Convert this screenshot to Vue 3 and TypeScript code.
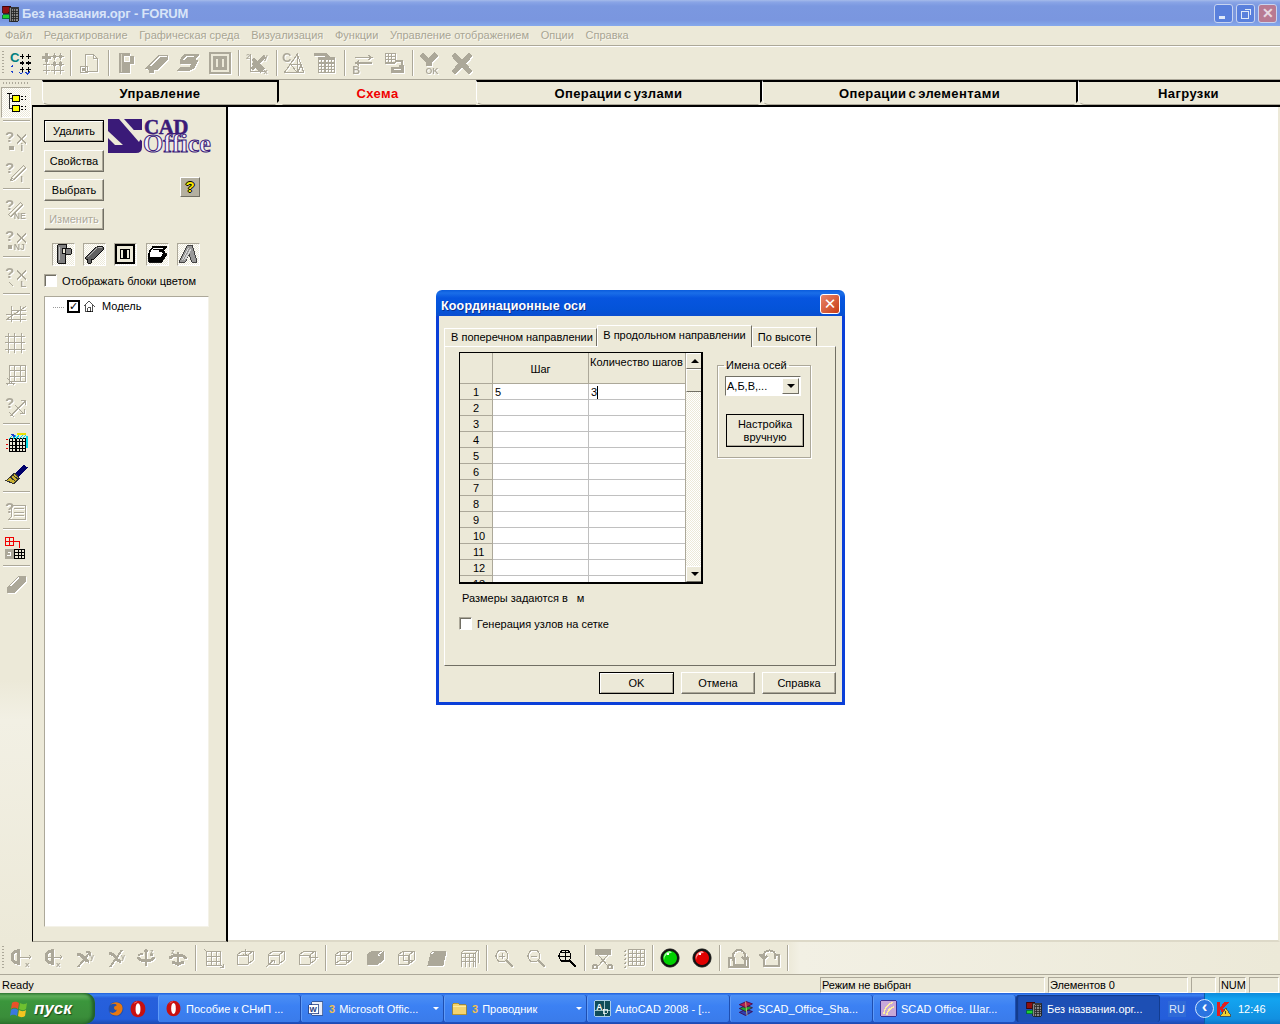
<script setup lang="ts">
import { h } from 'vue';

type Part = { d?: string; c?: string; f?: string; w?: number; t?: string; x?: number; y?: number; s?: number };
const G = '#aca899';
const p = (d: string, c: string = G, f: string = 'none', w = 1): Part => ({ d, c, f, w });
const tx = (t: string, x: number, y: number, s = 8, c: string = G): Part => ({ t, x, y, s, c });

const crosses = (xs: number[], ys: number[], s = 2) =>
  ys.map(y => xs.map(x => `M${x - s} ${y}h${2 * s}M${x} ${y - s}v${2 * s}`).join('')).join('');
const grid = (x: number, y: number, n: number, m: number, st: number) => {
  let d = '';
  for (let i = 0; i <= n; i++) d += `M${x + i * st} ${y}v${m * st}`;
  for (let j = 0; j <= m; j++) d += `M${x} ${y + j * st}h${n * st}`;
  return d;
};
const cube = 'M3 8l5-4h11v9l-5 4H3zM3 8h11v9M14 8l5-4';
const ask = (c: string = G): Part => ({ t: '?', x: 1, y: 13, s: 14, c });
const node = 'M12 6l8 8M20 6l-8 8';
const ball = (a: string, b: string): Part[] => [
  p('M11 2a9 9 0 1 0 .01 0z', '#111', '#111'),
  p('M11 4a7 7 0 1 0 .01 0z', 'none', b),
  p('M11 4a7 7 0 0 0-6 9a7 7 0 0 1 8-7z', 'none', a),
  p('M8 6h2v2H8z', 'none', '#fff')
];

const icons: Record<string, Part[]> = {
  nodes: [tx('C', 1, 10, 12, '#008080'), p(crosses([12, 18], [5, 11, 17]), '#000'), p(crosses([3], [14, 19], 1), '#1a3fd0'), p('M9 19l2 2 2-2M15 19l2 2 2-2', '#1a3fd0')],
  nodesOff: [p('M2 6h8M6 2v8', G, 'none', 3), p(crosses([6, 13, 19], [12, 18], 3) + crosses([13, 19], [5], 3)), p('M12 4h2v2h-2zM18 4h2v2h-2zM12 11h2v2h-2zM18 11h2v2h-2z', G, G)],
  doc: [p('M8 3h7l4 4v12H8zM15 3v4h4'), p('M3 14h7v6H3z', G), p('M5 16h3v2H5z', G, G)],
  column: [p('M5 2h9v3h4v6h-4v9H5z', G, G), p('M10 5h4v5h-4z', '#fff', '#ece9d8'), p('M7 3v16', '#d8d4c4')],
  beam: [p('M1 16L13 4h8v3L11 17H8v3H4v-3z', G, G), p('M5 14L14 5h6', '#fff')],
  slab: [p('M3 8l4-5h13l-3 4h-5l5 1 2 1-4 7-4 2H1l3-3h8l2-4H3z', G, G), p('M6 8l3-3h7', '#fff')],
  frame: [p('M2 2h18v18H2z', G, '#ece9d8', 2), p('M6 6h4v10H6zM12 6h4v10h-4z', G, '#ece9d8', 2)],
  scatter: [p('M5 3v16h14', G), p('M6 17L18 5M7 11l8 8M7 7l10 10', G, 'none', 3), tx('2', 1, 7, 7), tx('y', 17, 7, 7), tx('x', 17, 21, 7)],
  mesh: [tx('C', 0, 10, 12), p('M2 20L14 3l6 17zM8 12h10M14 3v17M8 12l6 8M18 12l-4 8')],
  gridRoof: [p('M1 3h10l4 4M5 7h15', G, 'none', 3), p(grid(5, 8, 5, 4, 3))],
  swap: [p('M5 6h14M17 4l3 2-3 2M20 11H6M8 9l-3 2 3 2'), tx('В', 2, 21, 10)],
  gridSwap: [p(grid(3, 2, 3, 3, 3)), p('M13 9h5v5M16 13l2 2 2-2', G, 'none', 2), p('M9 15h11v5H9z', G, G), p('M11 17h6', '#fff')],
  yMark: [p('M2 3l7 7 7-7M9 10v4', G, 'none', 5), tx('OK', 6, 21, 8)],
  bigX: [p('M3 3l16 17M19 3L3 20', G, 'none', 5)],

  tree: [p('M5 3v13M5 7h3M5 16h3', '#333'), p('M8 4h6v6H8zM8 13h6v6H8z', '#000', '#ffff00'), p('M3 2h4M16 5h1M19 5h1M16 8h1M19 8h1M16 14h1M19 14h1M16 17h1M19 17h1', '#000')],
  qNodeI: [ask(), p(node), tx('i', 15, 21, 10), p('M5 17h4v3H5z', G, G)],
  qPenI: [ask(), p('M6 20l3-1 11-11-2-2L7 17zM9 19l-2-2'), tx('I', 15, 21, 9)],
  qPenNe: [ask(), p('M4 17L15 6l2 2L6 19z'), tx('NE', 9, 21, 8)],
  qNodeNj: [ask(), p(node), tx('NJ', 9, 21, 8), p('M4 17h3v3H4z', G, G)],
  qNodeL: [ask(), p(node), tx('L', 15, 21, 9), p('M5 17l3 3')],
  rails: [p('M2 17L20 5M2 12h18M2 17h18M6 9h14M7 5v14M15 5v14')],
  gridDots: [p(crosses([4, 10, 16], [4, 10, 16], 3))],
  gridLarge: [p(grid(5, 2, 3, 3, 5)), p('M2 19h8M3 14l6 6M6 17l-3 3')],
  qArrows: [ask(), p('M6 20L20 6M16 6h4v4M10 10l8 8M15 18h4v-4M5 17l4 4')],
  mesh3d: [p(grid(5, 7, 5, 4, 3), '#000'), p('M5 7l3-3M8 7l3-3M11 7l3-3M14 7l3-3M17 7l3-3', '#00d8e8'), p('M7 3l3 2', '#1a3fd0', 'none', 2), p('M12 3h8', '#e8e000', 'none', 2), p('M21 5v11', '#00d8e8', 'none', 2), p('M2 8h2M2 12h2M2 16h2', '#e00000', 'none', 1)],
  brush: [p('M10 11l8-8 3 2-8 8z', '#00006a', '#00006a'), p('M10 10l4 5-5 5-7-3z', '#333', '#c8b030'), p('M6 14l5 4M8 12l5 4', '#333')],
  qSheet: [ask(), p('M7 6h13v13H4l3-3zM9 9h9M9 12h9M9 15h9')],
  redBlack: [p(grid(1, 1, 2, 2, 4), '#f00000'), p('M9 5h5v6', '#f00000'), p('M1 12h8v9H1z', G, G), p('M4 15h2v3H3', '#fff'), p(grid(10, 12, 3, 3, 3), '#000')],
  bar3d: [p('M3 14L14 3h6v4L9 18H3zM3 14h6v4M9 14L20 3', G, G), p('M6 12l8-8', '#fff')],

  axisX1: [p('M7 4a4 4 0 0 0 0 12M7 2v16', G, 'none', 3), p('M9 10h11M18 8l2 2-2 2'), tx('x', 14, 20, 8)],
  axisX2: [p('M10 4a4 4 0 0 0 0 12M10 2v16', G, 'none', 3), p('M4 10h16M18 8l2 2-2 2'), tx('x', 14, 20, 8)],
  axisY1: [p('M5 20L17 5M17 5h-4M17 5v4', G, 'none', 2), p('M4 8c6-3 8 8 12 6', G, 'none', 3), tx('y', 17, 12, 7)],
  axisY2: [p('M6 20L18 3', G, 'none', 2), p('M5 7c6-3 7 9 12 7', G, 'none', 3), tx('y', 17, 12, 7)],
  rotZ1: [p('M11 3v16M9 5l2-2 2 2', G, 'none', 2), p('M3 10a8 4 0 0 0 16 0', G, 'none', 3), p('M4 9a3 2 0 0 1 4-2M15 8h3', G, 'none', 2), tx('z', 15, 7, 7)],
  rotZ2: [p('M11 5v14', G, 'none', 2), p('M3 12a8 4 0 0 1 16 0M5 15a8 4 0 0 0 12 0', G, 'none', 3), tx('z', 4, 7, 7)],
  cubeGrid: [p('M3 4h14v14H3zM8 4v14M13 4v14M3 9h14M3 14h14'), p('M1 2l3 3M17 17l3 3M17 20h3v-3')],
  cubeDown: [p(cube), p('M11 2v7M9 7l2 2 2-2')],
  cubeArrow: [p(cube), p('M1 20l8-7M6 13h3v3')],
  cubeRight: [p(cube), p('M22 10h-9M15 8l-2 2 2 2')],
  cubeWire: [p(cube), p('M3 17l5-4h11M8 4v9')],
  cubeSolid: [p('M3 8l5-4h11v9l-5 4H3z', G, G), p('M14 8l5-4', '#fff'), p('M14 8h2', '#fff')],
  cubeFace: [p(cube), p('M14 8v9', G, 'none', 2), p('M8 4v9h11')],
  plateSolid: [p('M5 6L8 4h12l-3 14H2z', G, G), p('M8 5l-3 2', '#fff')],
  frame3d: [p('M4 6h14v14M4 6v14M8 6v14M12 6v14M16 6v14M4 10h14M4 14h14M4 6l3-3h14l-3 3M21 3v13')],
  zoomIn: [p('M9 3a6 6 0 1 0 .01 0zM6 9h6M9 6v6'), p('M13 13l7 7', G, 'none', 2)],
  zoomOut: [p('M9 3a6 6 0 1 0 .01 0zM6 9h6'), p('M13 13l7 7', G, 'none', 2)],
  zoomAll: [p('M9 3a6 6 0 1 0 .01 0zM3 9h12M9 3v12M5 5h8M5 13h8', '#000'), p('M13 13l7 7', '#000', 'none', 2)],
  cut: [p('M3 2h15v5H3z', G, G), p('M5 20L16 8M17 20L6 8'), p('M3 18a2 2 0 1 0 .01 0zM18 18a2 2 0 1 0 .01 0z', G, 'none', 2)],
  gridFine: [p(grid(5, 2, 4, 4, 4)), p(crosses([2], [4, 8, 12, 16, 20], 1))],
  green: ball('#9cff9c', '#00d000'),
  red: ball('#ff9a9a', '#e00000'),
  undo: [p('M2 11h5v7h11v-7h3v9H2z', G, 'none', 2), p('M6 14V9a6 6 0 0 1 12 0v3M18 13l-3-3M18 13l3-3', G, 'none', 2)],
  redo: [p('M1 8h4M17 8h4v11H6v-7', G, 'none', 2), p('M17 12V7A6 6 0 0 0 6 7v3M6 12L3 9M6 12l3-3', G, 'none', 2)],

  p1: [p('M5 1h10v4h5v6h-6v10H5z', '#000', '#808080'), p('M10 5h4v5h-4z', '#000', '#ece9d8'), p('M7 3v15', '#c8c8c8')],
  p2: [p('M1 16L14 3h7v4L11 17H8v4H4v-4z', '#000', '#606060'), p('M4 15L15 4h5', '#bbb')],
  p3: [p('M1 1h20v20H1z', '#000', '#ece9d8', 3), p('M6 6h4v10H6zM12 6h4v10h-4z', '#000', '#ece9d8', 2)],
  p4: [p('M3 8l4-5h14l-4 4h-4l6 2-3 6H2z', '#000', '#fff', 2), p('M2 15h15l4-5v3l-5 7H2z', '#000', '#000'), p('M7 6h6', '#000', 'none', 2)],
  p5: [p('M1 20L10 2h6l5 18h-6l-3-9-4 9z', '#333', '#999'), p('M5 18l7-14M7 18l7-13M9 16l5-10', '#ddd')],
  house: [p('M1 9l8-7 8 7M4 8v9h10V8M7 11h4v6H7z', '#000', '#fff')],

  fox: [p('M11 2a9 9 0 1 0 .01 0z', 'none', '#2050b0'), p('M4 6c3-4 10-5 14 0 3 6-1 12-6 13-5 0-8-2-9-5 3 3 8 2 9-2-3 1-4-2-3-4 1-1 3-1 3-2-2-2-5-2-8 0z', 'none', '#e87810')],
  opera: [p('M11 1c5 0 9 4 9 10s-4 10-9 10-9-4-9-10S6 1 11 1z', 'none', '#c81010'), p('M11 4c-2 0-3 3-3 7s1 7 3 7 3-3 3-7-1-7-3-7z', 'none', '#fff'), p('M6 4l4-2', '#ff7070')],
  word: [p('M5 2h14v18H5z', '#33508a', '#e8edf8'), p('M1 6h13v12H1z', '#1e3a80', '#fff'), tx('W', 2, 16, 10, '#1e3a80')],
  folder: [p('M2 6l1-2h6l2 2h9v13H2z', '#a8881c', '#f4d470'), p('M2 9h18', '#fff2b0')],
  acad: [p('M1 1h20v20H1z', '#c8e4e4', '#104c58'), tx('A', 3, 13, 11, '#fff'), p('M14 1v20M1 14h20', '#c8e4e4'), p('M12 12h5v5h-5z', '#fff')],
  rar: [p('M3 16l9-4 8 3-9 5z', '#400040', '#3040b0'), p('M3 11l9-4 8 3-9 5z', '#400040', '#20a030'), p('M3 6l9-4 8 3-9 5z', '#400040', '#b02050'), p('M11 2l2 18', '#e0d080')],
  scad: [p('M1 1h20v20H1z', '#3a1a78', '#c8a8d8'), p('M5 18C6 10 10 5 17 3M9 19c1-6 5-9 9-10', '#fff0a0', 'none', 2)],
  forum: [p('M1 3h10l-3 8H1z', '#300', '#901010'), p('M9 4h11v17H9z', '#222', '#888'), p(grid(11, 6, 3, 5, 3), '#222'), p('M1 13h8v5H1z', '#063', '#20d030')],
  kav: [p('M2 2h4v8l7-8h6l-9 9 9 10h-6l-7-9v9H2z', 'none', '#e02020'), p('M14 10l7 11h-14z', '#444', '#f0d030'), p('M14 14v4', '#222')]
};

const smooth = new Set(['green', 'red', 'fox', 'opera', 'rar']);

const Ico = (props: { name: string; size?: number }) => {
  const parts = icons[props.name] || [];
  return h('svg', {
    viewBox: '0 0 22 22',
    width: props.size || 22,
    height: props.size || 22,
    'shape-rendering': smooth.has(props.name) ? 'auto' : 'crispEdges'
  }, parts.map(q => q.t
    ? h('text', { x: q.x, y: q.y, 'font-size': q.s, 'font-weight': 'bold', 'font-family': '"Liberation Sans", sans-serif', fill: q.c }, q.t)
    : h('path', { d: q.d, stroke: q.c, fill: q.f, 'stroke-width': q.w })));
};
Ico.props = ['name', 'size'];

const menu = ['Файл', 'Редактирование', 'Графическая среда', 'Визуализация', 'Функции', 'Управление отображением', 'Опции', 'Справка'];

const topBar = ['nodes', 'nodesOff', '|', 'doc', '|', 'column', 'beam', 'slab', 'frame', '|', 'scatter', '|', 'mesh', 'gridRoof', '|', 'swap', 'gridSwap', '|', 'yMark', 'bigX'];
const rail = ['tree', '|', 'qNodeI', 'qPenI', '|', 'qPenNe', 'qNodeNj', '|', 'qNodeL', '|', 'rails', 'gridDots', 'gridLarge', 'qArrows', '|', 'mesh3d', 'brush', '|', 'qSheet', '|', 'redBlack', '|', 'bar3d'];
const railOn = ['mesh3d', 'brush', 'redBlack', 'tree'];
const bottomBar = ['axisX1', 'axisX2', 'axisY1', 'axisY2', 'rotZ1', 'rotZ2', '|', 'cubeGrid', 'cubeDown', 'cubeArrow', 'cubeRight', '|', 'cubeWire', 'cubeSolid', 'cubeFace', 'plateSolid', 'frame3d', '|', 'zoomIn', 'zoomOut', 'zoomAll', '|', 'cut', 'gridFine', '|', 'green', 'red', '|', 'undo', 'redo', '|'];
const barOn = ['nodes', 'zoomAll', 'green', 'red'];

const tabs = [
  { label: 'Управление', w: 237 },
  { label: 'Схема', w: 197, active: true },
  { label: 'Операции с узлами', w: 286 },
  { label: 'Операции с элементами', w: 316 },
  { label: 'Нагрузки', w: 222 }
];

const tasks = [
  { icon: 'opera', label: 'Пособие к СНиП ...', w: 143 },
  { icon: 'word', count: '3', label: 'Microsoft Offic...', w: 143, arrow: true },
  { icon: 'folder', count: '3', label: 'Проводник', w: 143, arrow: true },
  { icon: 'acad', label: 'AutoCAD 2008 - [...', w: 143 },
  { icon: 'rar', label: 'SCAD_Office_Sha...', w: 143 },
  { icon: 'scad', label: 'SCAD Office. Шаг...', w: 143 },
  { icon: 'forum', label: 'Без названия.орг...', w: 144, active: true }
];

const rowsNo = Array.from({ length: 13 }, (_, i) => i + 1);
</script>

<template>
  <div class="desk">
    <div class="titlebar">
      <Ico name="forum" :size="18" />
      <span class="title">Без названия.орг - FORUM</span>
      <span class="caps">
        <span class="cap"><i class="mini"></i></span>
        <span class="cap"><i class="restore"></i></span>
        <span class="cap close">✕</span>
      </span>
    </div>

    <div class="menubar">
      <span v-for="m in menu" :key="m">{{ m }}</span>
    </div>

    <div class="toolbar top">
      <i class="grip-v"></i>
      <template v-for="(b, i) in topBar" :key="i">
        <i v-if="b === '|'" class="sep"></i>
        <span v-else class="tool" :class="{ off: !barOn.includes(b) }"><Ico :name="b" :size="24" /></span>
      </template>
    </div>

    <div class="work">
      <div class="rail">
        <i class="grip-h"></i>
        <template v-for="(b, i) in rail" :key="i">
          <i v-if="b === '|'" class="sep-h"></i>
          <span v-else class="rail-tool" :class="{ off: !railOn.includes(b), pressed: b === 'tree' }"><Ico :name="b" :size="24" /></span>
        </template>
      </div>

      <div class="right">
        <div class="tabs">
          <div v-for="t in tabs" :key="t.label" class="tab" :class="{ active: t.active }" :style="{ width: t.w + 'px' }">
            {{ t.label }}
            <i v-if="!t.active" class="notch"></i>
          </div>
        </div>

        <div class="content">
          <div class="side">
            <div class="side-top">
              <div class="side-btns">
                <button class="btn default">Удалить</button>
                <button class="btn">Свойства</button>
                <button class="btn">Выбрать</button>
                <button class="btn disabled">Изменить</button>
              </div>
              <div class="side-extra">
                <div class="logo">
                  <svg class="logo-s" viewBox="0 0 34 34" width="34" height="34" shape-rendering="geometricPrecision">
                    <path d="M0 0h34v12l0 16q0 6-6 6H0z" fill="#3a1a78" />
                    <path d="M11 0h5l17 19-2 4z" fill="#ece9d8" />
                    <path d="M21 11h13v11z" fill="#ece9d8" />
                    <path d="M0 12l15 14H7L0 19z" fill="#ece9d8" />
                  </svg>
                  <span class="logo-cad">CAD</span>
                  <span class="logo-office">Office</span>
                </div>
                <button class="help">?</button>
              </div>
            </div>

            <div class="block-icons">
              <span v-for="n in ['p1', 'p2', 'p3', 'p4', 'p5']" :key="n" class="block-icon"><Ico :name="n" :size="20" /></span>
            </div>

            <label class="check-row">
              <i class="check"></i>
              <span>Отображать блоки цветом</span>
            </label>

            <div class="tree">
              <i class="dots"></i>
              <i class="check checked">✓</i>
              <Ico name="house" :size="15" />
              <span class="tree-label">Модель</span>
            </div>
          </div>
          <div class="canvas"></div>
        </div>
      </div>
    </div>

    <div class="toolbar bottom">
      <i class="grip-v"></i>
      <template v-for="(b, i) in bottomBar" :key="i">
        <i v-if="b === '|'" class="sep"></i>
        <span v-else class="tool" :class="{ off: !barOn.includes(b) }"><Ico :name="b" :size="22" /></span>
      </template>
    </div>

    <div class="statusbar">
      <span class="ready">Ready</span>
      <span class="pane p-mode">Режим не выбран</span>
      <span class="pane p-count">Элементов 0</span>
      <span class="pane p-blank"></span>
      <span class="pane p-num">NUM</span>
      <span class="pane p-end"></span>
    </div>

    <div class="taskbar">
      <div class="start">
        <svg viewBox="0 0 20 20" width="20" height="20">
          <path d="M2 4c3-2 5-1 7 0l-1 6c-2-1-4-2-7 0z" fill="#e8502a" />
          <path d="M10 4c2 1 4 2 7 0l-1 6c-3 2-5 1-7 0z" fill="#6fc030" />
          <path d="M1 11c3-2 5-1 7 0l-1 6c-2-1-4-2-7 0z" fill="#3a78e0" />
          <path d="M9 11c2 1 4 2 7 0l-1 6c-3 2-5 1-7 0z" fill="#f4c420" />
        </svg>
        <span>пуск</span>
      </div>
      <div class="quick">
        <Ico name="fox" :size="18" />
        <Ico name="opera" :size="18" />
      </div>
      <div class="tasks">
        <div v-for="t in tasks" :key="t.label" class="task" :class="{ active: t.active }" :style="{ width: t.w + 'px' }">
          <Ico :name="t.icon" :size="17" />
          <b v-if="t.count" class="count">{{ t.count }}</b>
          <span class="task-label">{{ t.label }}</span>
          <i v-if="t.arrow" class="task-arrow"></i>
        </div>
      </div>
      <span class="lang">RU</span>
      <div class="tray">
        <span class="chevron">‹</span>
        <Ico name="kav" :size="17" />
        <span class="clock">12:46</span>
      </div>
    </div>

    <!-- диалог лежит поверх окна -->
    <div class="dialog">
      <div class="dlg-title">
        <span class="dlg-caption">Координационные оси</span>
        <span class="dlg-close">✕</span>
      </div>
      <div class="dlg-body">
        <div class="dlg-tabs">
          <span class="dlg-tab t1">В поперечном направлении</span>
          <span class="dlg-tab t2">В продольном направлении</span>
          <span class="dlg-tab t3">По высоте</span>
        </div>
        <div class="dlg-panel">
          <div class="dlg-columns">
            <div class="sheet">
              <div class="sheet-main">
                <div class="sheet-head">
                  <span class="corner"></span>
                  <span class="head-a">Шаг</span>
                  <span class="head-b">Количество шагов</span>
                </div>
                <div class="sheet-rows">
                  <div v-for="n in rowsNo" :key="n" class="sheet-row">
                    <span class="row-no">{{ n }}</span>
                    <span class="cell">{{ n === 1 ? '5' : '' }}</span>
                    <span class="cell"><template v-if="n === 1">3<i class="caret"></i></template></span>
                  </div>
                </div>
              </div>
              <div class="vscroll">
                <span class="sb-btn"><i class="tri-up"></i></span>
                <span class="sb-thumb"></span>
                <span class="sb-track"></span>
                <span class="sb-btn"><i class="tri-down"></i></span>
              </div>
            </div>
            <fieldset class="names">
              <legend>Имена осей</legend>
              <div class="combo">
                <span class="combo-text">А,Б,В,...</span>
                <span class="combo-btn"><i class="tri-down"></i></span>
              </div>
              <button class="btn manual">Настройка<br />вручную</button>
            </fieldset>
          </div>
          <div class="units"><span>Размеры задаются в</span><span class="unit">м</span></div>
          <label class="check-row gen">
            <i class="check"></i>
            <span>Генерация узлов на сетке</span>
          </label>
        </div>
        <div class="dlg-foot">
          <button class="btn default foot">OK</button>
          <button class="btn foot">Отмена</button>
          <button class="btn foot">Справка</button>
        </div>
      </div>
    </div>
  </div>
</template>

<style>
html, body { margin: 0; background: #ece9d8; }
</style>

<style scoped>
.desk {
  position: relative;
  width: 1280px;
  height: 1024px;
  overflow: hidden;
  display: flex;
  flex-direction: column;
  background: #ece9d8;
  font-family: "Liberation Sans", Arial, sans-serif;
  font-size: 11px;
  color: #000;
}
i { font-style: normal; display: block; }
svg { display: block; flex: none; }

.titlebar {
  height: 26px;
  flex: none;
  display: flex;
  align-items: center;
  padding: 0 3px 0 2px;
  box-sizing: border-box;
  background: linear-gradient(#a5bbea 0, #8aa5e6 2px, #7b98e0 6px, #7a96df 20px, #86a9ec 26px);
}
.title {
  margin-left: 2px;
  color: #d8e4f8;
  font-size: 13px;
  font-weight: bold;
  letter-spacing: -0.2px;
}
.caps { margin-left: auto; display: flex; gap: 3px; }
.cap {
  width: 19px;
  height: 19px;
  box-sizing: border-box;
  border: 1px solid #c8d4f0;
  border-radius: 3px;
  background: #5a80dc;
  position: relative;
  color: #e8d8e0;
  font-size: 14px;
  font-weight: bold;
  line-height: 17px;
  text-align: center;
}
.cap.close { background: #b87a92; }
.mini { position: absolute; left: 4px; bottom: 3px; width: 6px; height: 3px; background: #dfe8f8; }
.restore { position: absolute; left: 4px; top: 6px; width: 6px; height: 6px; border: 1px solid #dfe8f8; box-shadow: 2px -2px 0 -1px #5a80dc, 3px -3px 0 -1px #dfe8f8; }

.menubar {
  height: 20px;
  flex: none;
  display: flex;
  align-items: center;
  gap: 11.7px;
  padding: 0 0 2px 5px;
  box-sizing: border-box;
  color: #a8a594;
  text-shadow: 1px 1px 0 #f8f6ec;
  border-bottom: 1px solid #aca899;
  box-shadow: 0 1px 0 #fff;
}

.toolbar { flex: none; display: flex; align-items: center; box-sizing: border-box; }
.toolbar.top { height: 34px; padding-left: 2px; border-bottom: 1px solid #aca899; }
.toolbar.bottom { height: 33px; padding-left: 2px; border-bottom: 1px solid #aca899; background: linear-gradient(90deg, #ece9d8 788px, #f2f0e4 800px, #ece9d8); }
.grip-v { width: 2px; height: 24px; margin-right: 2px; background: repeating-linear-gradient(#aca899 0 1px, transparent 1px 3px); }
.top .grip-v { margin-right: 1px; }
.tool { width: 31.2px; display: flex; justify-content: center; }
.off svg { filter: drop-shadow(1px 1px 0 #fff); }
.sep { width: 1px; height: 26px; margin: 0 2px 0 2px; background: #aca899; box-shadow: 1px 0 0 #fff; }
.top .sep { margin: 0 2px 0 3px; }

.work { flex: 1; min-height: 0; display: flex; }
.rail {
  width: 32px;
  flex: none;
  box-sizing: border-box;
  padding-top: 2px;
  display: flex;
  flex-direction: column;
  align-items: center;
  background: linear-gradient(#ece9d8 600px, #f2f0e4 640px, #ece9d8);
}
.grip-h { width: 26px; height: 2px; margin-bottom: 3px; background: repeating-linear-gradient(90deg, #aca899 0 1px, transparent 1px 3px); }
.rail-tool { height: 31px; width: 100%; display: flex; align-items: center; justify-content: center; }
.rail-tool.pressed { width: 30px; box-sizing: border-box; background: repeating-conic-gradient(#fff 0 25%, #ece9d8 0 50%) 0 0 / 2px 2px; border-top: 1px solid #aca899; border-left: 1px solid #aca899; border-right: 1px solid #fff; border-bottom: 1px solid #fff; }
.sep-h { width: 27px; height: 1px; margin: 2px 0 3px; background: #aca899; box-shadow: 0 1px 0 #fff; }

.right { flex: 1; min-width: 0; display: flex; flex-direction: column; }
.tabs { height: 27px; flex: none; display: flex; padding-left: 10px; box-sizing: border-box; border-bottom: 2px solid #000; overflow: hidden; }
.tab {
  position: relative;
  box-sizing: border-box;
  height: 25px;
  flex: none;
  padding-top: 4px;
  text-align: center;
  font-size: 13px;
  font-weight: bold;
  letter-spacing: 0.4px;
  word-spacing: -2px;
  border-top: 2px solid #000;
  border-right: 2px solid #000;
  border-left: 1px solid #fff;
  border-bottom: 1px solid #aca899;
  border-bottom-left-radius: 6px;
}
.tab.active { color: #f00000; border-top: 0; border-right: 0; border-left: 0; padding-top: 6px; height: 26px; border-bottom: 2px solid #aca899; margin-bottom: -1px; z-index: 1; border-radius: 0; background: #ece9d8; }
.notch { position: absolute; right: -7px; bottom: -2px; width: 0; height: 0; border: 5px solid transparent; border-top: 0; border-bottom: 5px solid #ece9d8; z-index: 2; }

.content { flex: 1; min-height: 0; display: flex; }
.side {
  width: 196px;
  flex: none;
  box-sizing: border-box;
  border-left: 1px solid #000;
  border-right: 2px solid #000;
  padding: 13px 0 14px 11px;
  display: flex;
  flex-direction: column;
  border-bottom: 1px solid #aca899;
}
.side-top { display: flex; }
.side-btns { display: flex; flex-direction: column; gap: 7px; width: 60px; }
.btn {
  box-sizing: border-box;
  width: 60px;
  height: 22px;
  padding: 0;
  background: #ece9d8;
  font: inherit;
  color: #000;
  border: 1px solid;
  border-color: #fff #716f64 #716f64 #fff;
  box-shadow: inset -1px -1px 0 #aca899;
}
.btn.default { border: 1px solid #000; box-shadow: inset 1px 1px 0 #fff, inset -1px -1px 0 #aca899; }
.side-btns .btn.default { margin-bottom: 1px; }
.btn.disabled { color: #aca899; text-shadow: 1px 1px 0 #fff; }
.side-extra { margin-left: 4px; flex: 1; }
.logo { position: relative; width: 106px; height: 36px; margin-top: -2px; }
.logo-s { position: absolute; left: 0; top: 1px; }
.logo-cad {
  position: absolute;
  left: 36px;
  top: 1px;
  color: #3a1a78;
  font: bold 21px/16px "Liberation Serif", serif;
  letter-spacing: -0.5px;
  -webkit-text-stroke: 0.5px #3a1a78;
}
.logo-office {
  position: absolute;
  left: 35px;
  top: 17px;
  color: #f4f0fa;
  font: bold 26px/18px "Liberation Serif", serif;
  -webkit-text-stroke: 1px #3a1a78;
}
.help {
  display: block;
  margin: 23px 0 0 72px;
  width: 20px;
  height: 20px;
  padding: 0;
  background: #b4b0a0;
  border: 1px solid;
  border-color: #fff #716f64 #716f64 #fff;
  color: #f4e800;
  font: bold 15px/18px "Liberation Sans", sans-serif;
  text-shadow: 1px 0 0 #000, -1px 0 0 #000, 0 1px 0 #000, 0 -1px 0 #000;
}
.block-icons { display: flex; gap: 8.2px; margin: 13px 0 0 8px; }
.block-icon {
  width: 23px;
  height: 23px;
  box-sizing: border-box;
  padding: 0;
  border: 1px solid;
  border-color: #aca899 #fff #fff #aca899;
  background: repeating-conic-gradient(#fff 0 25%, #ece9d8 0 50%) 0 0 / 2px 2px;
}
.check-row { display: flex; align-items: center; gap: 5px; margin-top: 8px; }
.check {
  width: 13px;
  height: 13px;
  flex: none;
  box-sizing: border-box;
  background: #fff;
  border: 1px solid;
  border-color: #aca899 #fff #fff #aca899;
  box-shadow: inset 1px 1px 0 #716f64;
}
.tree {
  flex: 1;
  width: 165px;
  margin-top: 9px;
  box-sizing: border-box;
  background: #fff;
  border: 1px solid;
  border-color: #aca899 #f4f2e8 #f4f2e8 #aca899;
  display: flex;
  align-items: flex-start;
  padding: 3px 0 0 8px;
  gap: 3px;
}
.dots { width: 11px; height: 1px; margin-top: 7px; margin-right: 0; background: repeating-linear-gradient(90deg, #999 0 1px, transparent 1px 2px); }
.check.checked { border: 2px solid #000; box-shadow: none; font: bold 11px/9px "DejaVu Sans", sans-serif; text-align: center; }
.tree-label { margin-left: 1px; line-height: 12px; }
.canvas { flex: 1; background: #fff; border-right: 2px solid #ece9d8; border-bottom: 2px solid #ddd9c8; }

.statusbar { height: 18px; flex: none; display: flex; align-items: center; box-sizing: border-box; padding-top: 2px; }
.ready { width: 820px; padding-left: 2px; box-sizing: border-box; }
.pane {
  box-sizing: border-box;
  height: 16px;
  line-height: 14px;
  padding-left: 1px;
  border: 1px solid;
  border-color: #aca899 #fff #fff #aca899;
  flex: none;
  letter-spacing: -0.1px;
}
.p-mode { width: 225px; margin-right: 3px; }
.p-count { width: 140px; margin-right: 3px; }
.p-blank { width: 25px; margin-right: 3px; }
.p-num { width: 27px; margin-right: 3px; }
.p-end { width: 30px; }

.taskbar {
  height: 31px;
  flex: none;
  display: flex;
  align-items: center;
  background: linear-gradient(#1f5fd8 0, #3c81f2 2px, #2760dc 5px, #245edb 26px, #1d49b0 31px);
  color: #fff;
}
.start {
  width: 95px;
  height: 31px;
  flex: none;
  box-sizing: border-box;
  display: flex;
  align-items: center;
  gap: 4px;
  padding-left: 10px;
  border-radius: 0 10px 10px 0;
  background: linear-gradient(#3c8a3c 0, #5fae5a 3px, #3b963c 8px, #3a8d3a 24px, #2f7a2f 31px);
  box-shadow: inset -3px 0 3px #22602a;
  font: italic bold 17px/1 "Liberation Sans", sans-serif;
  text-shadow: 1px 1px 1px #1c4a1c;
}
.quick { width: 63px; flex: none; display: flex; gap: 4px; padding-left: 12px; box-sizing: border-box; }
.tasks { display: flex; flex: none; }
.task {
  flex: none;
  box-sizing: border-box;
  height: 27px;
  display: flex;
  align-items: center;
  padding: 0 5px 0 6px;
  margin-right: 0;
  border-radius: 3px;
  background: linear-gradient(#4c8ff4, #3c81f3 40%, #3a7bea);
  border-right: 1px solid #1e4eb0;
  border-left: 1px solid #5f9bf8;
  font-size: 11px;
  white-space: nowrap;
  overflow: hidden;
  position: relative;
}
.task.active { padding-left: 9px; background: #1d4fb4; border-color: #123c90; box-shadow: inset 1px 1px 1px #143a88; }
.count { color: #f0c050; margin-left: 4px; font-weight: bold; }
.task-label { margin-left: 4px; }
.task-arrow { position: absolute; right: 4px; top: 12px; width: 0; height: 0; border: 3px solid transparent; border-top: 3px solid #fff; border-bottom: 0; }
.lang { margin-left: 8px; width: 18px; color: #dfe8f8; background: #2f6ad8; line-height: 16px; text-align: center; flex: none; }
.tray {
  margin-left: 18px;
  flex: 1;
  height: 31px;
  display: flex;
  align-items: center;
  gap: 1px;
  background: linear-gradient(#0c8bdc, #13a4f0 6px, #1290e0 26px, #0c74c8);
  border-left: 1px solid #0a5ea8;
  box-sizing: border-box;
}
.chevron {
  width: 19px;
  height: 19px;
  margin-left: -10px;
  border-radius: 50%;
  flex: none;
  background: #2a74e0;
  border: 1px solid #d0e4ff;
  box-sizing: border-box;
  color: #fff;
  font: bold 17px/14px "Liberation Sans", sans-serif;
  text-align: center;
}
.clock { margin-left: 5px; }

.dialog {
  position: absolute;
  left: 436px;
  top: 290px;
  width: 409px;
  height: 415px;
  display: flex;
  flex-direction: column;
}
.dlg-title {
  height: 26px;
  flex: none;
  display: flex;
  align-items: center;
  justify-content: space-between;
  padding: 0 5px;
  box-sizing: border-box;
  border-radius: 6px 6px 0 0;
  background: linear-gradient(#0a5bdc 0, #1a6ee8 3px, #0755df 8px, #0453d8 20px, #0a4ed0 26px);
  color: #fff;
  font-size: 12.5px;
  font-weight: bold;
  letter-spacing: 0.18px;
  text-shadow: 1px 1px 0 #0a2f90;
}
.dlg-caption { margin-top: 5px; }
.dlg-close {
  width: 20px;
  height: 20px;
  margin-top: 2px;
  box-sizing: border-box;
  border: 1px solid #fff;
  border-radius: 3px;
  background: linear-gradient(135deg, #e8856a, #c83c14);
  font: bold 15px/18px "DejaVu Sans", sans-serif;
  text-align: center;
  letter-spacing: 0;
  text-shadow: none;
}
.dlg-body {
  flex: 1;
  box-sizing: border-box;
  border: 3px solid #0a3fd8;
  border-top: 0;
  background: #ece9d8;
  padding: 9px 6px 0 5px;
  display: flex;
  flex-direction: column;
}
.dlg-tabs { height: 21px; flex: none; display: flex; align-items: flex-end; }
.dlg-tab {
  flex: none;
  box-sizing: border-box;
  text-align: center;
  border: 1px solid;
  border-color: #fff #716f64 transparent #fff;
  border-bottom: 0;
  white-space: nowrap;
}
.t1 { width: 153px; height: 18px; line-height: 16px; padding-left: 3px; }
.t2 { width: 155px; height: 22px; line-height: 18px; position: relative; margin-bottom: -1px; background: #ece9d8; z-index: 1; }
.t3 { width: 65px; height: 19px; line-height: 18px; }
.dlg-panel {
  height: 320px;
  flex: none;
  box-sizing: border-box;
  border: 1px solid;
  border-color: #fff #716f64 #716f64 #fff;
  padding: 5px 0 0 14px;
}
.dlg-columns { display: flex; align-items: flex-start; }
.sheet {
  width: 244px;
  height: 232px;
  flex: none;
  box-sizing: border-box;
  border: 1px solid #000;
  border-right-width: 2px;
  border-bottom-width: 2px;
  display: flex;
  overflow: hidden;
}
.sheet-main { width: 225px; flex: none; background: #fff; }
.sheet-head { display: flex; height: 31px; background: #ece9d8; border-bottom: 1px solid #aca899; box-sizing: border-box; }
.corner { width: 33px; border-right: 1px solid #aca899; box-sizing: border-box; }
.head-a { width: 96px; box-sizing: border-box; border-right: 1px solid #aca899; text-align: center; line-height: 32px; }
.head-b { width: 96px; box-sizing: border-box; padding-left: 1px; line-height: 19px; white-space: nowrap; }
.sheet-rows { height: 200px; overflow: hidden; }
.sheet-row { display: flex; height: 16px; }
.row-no {
  width: 33px;
  box-sizing: border-box;
  padding-left: 13px;
  background: #ece9d8;
  border-right: 1px solid #aca899;
  border-bottom: 1px solid #aca899;
  font-size: 11px;
  line-height: 17px;
  text-align: left;
}
.cell {
  width: 96px;
  box-sizing: border-box;
  padding-left: 2px;
  border-right: 1px solid #c0c0c0;
  border-bottom: 1px solid #c0c0c0;
  line-height: 16px;
  display: flex;
}
.cell:last-child { border-right: 0; }
.caret { width: 1px; height: 13px; margin-top: 2px; background: #000; }
.vscroll { width: 17px; flex: none; display: flex; flex-direction: column; border-left: 1px solid #aca899; }
.sb-btn, .sb-thumb { flex: none; box-sizing: border-box; background: #ece9d8; border: 1px solid; border-color: #fff #716f64 #716f64 #fff; display: flex; align-items: center; justify-content: center; }
.sb-btn { height: 16px; }
.sb-thumb { height: 23px; }
.sb-track { flex: 1; background: repeating-conic-gradient(#fff 0 25%, #ece9d8 0 50%) 0 0 / 2px 2px; }
.tri-up { width: 0; height: 0; border: 4px solid transparent; border-top: 0; border-bottom: 4px solid #000; }
.tri-down { width: 0; height: 0; border: 4px solid transparent; border-bottom: 0; border-top: 4px solid #000; }
.names {
  width: 94px;
  height: 99px;
  box-sizing: border-box;
  margin: 7px 0 0 14px;
  padding: 0;
  border: 1px solid #aca899;
  box-shadow: 1px 1px 0 #fff, inset 1px 1px 0 #fff;
  min-width: 0;
}
.names legend { margin-left: 6px; padding: 0 2px; line-height: 13px; }
.combo {
  width: 76px;
  height: 20px;
  margin: 4px 0 0 7px;
  box-sizing: border-box;
  background: #fff;
  border: 1px solid;
  border-color: #716f64 #fff #fff #716f64;
  display: flex;
  align-items: center;
  justify-content: space-between;
}
.combo-text { padding-left: 1px; }
.combo-btn { width: 17px; height: 16px; margin-right: 1px; box-sizing: border-box; background: #ece9d8; border: 1px solid; border-color: #fff #716f64 #716f64 #fff; display: flex; align-items: center; justify-content: center; }
.btn.manual { display: block; width: 78px; height: 33px; margin: 18px 0 0 8px; line-height: 13px; border: 1px solid #000; }
.units { margin: 7px 0 0 3px; display: flex; line-height: 14px; }
.unit { margin-left: 9px; }
.check-row.gen { margin-top: 12px; }
.dlg-foot { display: flex; justify-content: flex-end; gap: 7px; margin-top: 6px; }
.btn.foot { width: 74px; height: 22px; }
.btn.default.foot { width: 75px; }
</style>
